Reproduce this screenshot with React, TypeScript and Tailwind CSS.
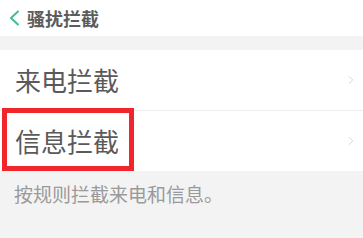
import { ChevronRight } from 'lucide-react'

const font = { fontFamily: '"Noto Sans CJK SC", "Noto Sans", sans-serif' }

function Row({ label, boxed }: { label: string; boxed?: boolean }) {
  return (
    <div className="relative flex h-[60px] items-center justify-between bg-white pl-[15px] pr-[5px]">
      <span className="text-[26px] leading-none text-[#5a5a5a]">{label}</span>
      <ChevronRight className="h-[14px] w-[14px] text-[#cfcfcf]" strokeWidth={1.5} />
      {boxed && (
        <div className="absolute left-[2px] top-[-3px] h-[63px] w-[132px] border-[5px] border-[#f0262c]" />
      )}
    </div>
  )
}

export default function App() {
  return (
    <div className="h-[238px] w-[363px] overflow-hidden bg-[#f3f3f3]" style={font}>
      {/* Header */}
      <div className="flex h-[36px] items-center bg-white pl-[8px]">
        <svg width="14" height="18" viewBox="0 0 14 18" className="mr-[5px]">
          <path d="M10.5 2 L3 9 L10.5 16" fill="none" stroke="#3dbf8e" strokeWidth="2" />
        </svg>
        <span className="text-[18px] font-bold leading-none text-[#5c5c5c]">骚扰拦截</span>
      </div>

      <div className="h-[14px]" />

      <div className="bg-white">
        <Row label="来电拦截" />
        <div className="h-px bg-[#eeeeee]" />
        <Row label="信息拦截" boxed />
      </div>

      <div className="pl-[14px] pt-[13px] text-[19px] leading-none text-[#9a9a9a]">
        按规则拦截来电和信息。
      </div>
    </div>
  )
}
